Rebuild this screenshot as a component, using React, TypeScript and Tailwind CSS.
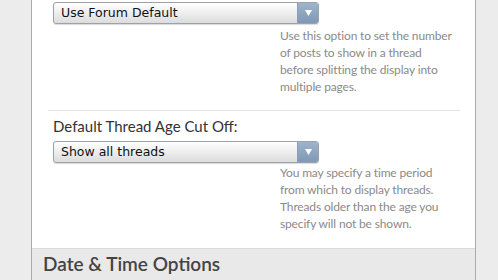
import React from 'react';

// 下拉框，带右侧蓝灰色箭头按钮
function FakeSelect({ value }: { value: string }) {
  return (
    <div className="flex h-[22px] w-[266px] overflow-hidden rounded-[3px] border border-[#9aa3ad] bg-gradient-to-b from-[#ffffff] to-[#dcdcdc] shadow-[0_1px_1px_rgba(0,0,0,0.15)]">
      <div className="flex flex-1 items-center pl-[7px] text-[12.5px] text-[#111] [font-family:'DejaVu_Sans',Verdana,sans-serif]">
        {value}
      </div>
      <div className="flex w-[21px] items-center justify-center border-l border-[#8c9fb5] bg-gradient-to-b from-[#9fb4cc] to-[#7f98b5]">
        <svg width="7" height="6" viewBox="0 0 7 6">
          <polygon points="0,0 7,0 3.5,6" fill="#ffffff" />
        </svg>
      </div>
    </div>
  );
}

function Explain({ children, top = 'mt-[3px]' }: { children: React.ReactNode; top?: string }) {
  return (
    <p className={`ml-[227px] ${top} w-[176px] text-[12px] tracking-[-0.15px] leading-[17px] text-[#8a8a8a] [font-family:Lato,'Open_Sans',sans-serif]`}>
      {children}
    </p>
  );
}

export default function App() {
  return (
    <div className="h-[280px] w-[498px] overflow-hidden bg-[#ececec] pl-[31px]">
      <div className="flex h-[280px] w-[445px] flex-col border-x border-[#a6adb7] bg-white">
        <div className="flex-1 pl-[21px] pt-[2px]">
          <FakeSelect value="Use Forum Default" />
          <Explain>
            Use this option to set the number of posts to show in a thread before splitting the display into multiple pages.
          </Explain>

          <div className="ml-[-5px] mr-[15px] mt-[15px] h-px bg-[#e1e5ea]" />

          <div className="mt-[5px] text-[15px] leading-[20px] text-[#333] [font-family:Lato,'Open_Sans',sans-serif]">
            Default Thread Age Cut Off:
          </div>
          <div className="mt-[5px]">
            <FakeSelect value="Show all threads" />
          </div>
          <Explain top="mt-[1px]">
            You may specify a time period from which to display threads. Threads older than the age you specify will not be shown.
          </Explain>
        </div>

        <div className="flex h-[32px] items-center border-t border-[#d9d9d9] bg-[#e9e9e9] pl-[11px] text-[19px] font-semibold text-[#444] [font-family:Lato,'Open_Sans',sans-serif]">
          Date &amp; Time Options
        </div>
      </div>
    </div>
  );
}
